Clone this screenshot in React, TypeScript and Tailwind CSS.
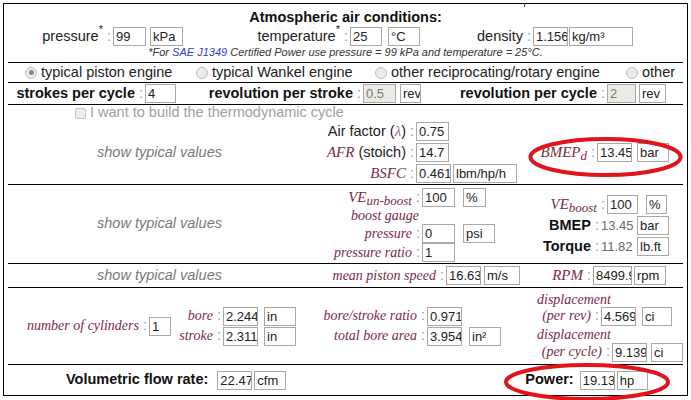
import React from 'react';

function Box({ children, className = '', gray = false }: { children?: React.ReactNode; className?: string; gray?: boolean }) {
  return (
    <span
      className={`inline-flex h-[19px] shrink-0 items-center overflow-hidden whitespace-nowrap border border-[#a8a8a8] pl-[2px] text-[13px] font-normal not-italic leading-none ${gray ? 'bg-[#ebebe4] text-[#7a7a7a]' : 'bg-white text-[#222]'} ${className}`}
    >
      {children}
    </span>
  );
}

const Colon = () => <span className="ml-[4px] mr-[2px] font-normal not-italic text-[#9a9a9a]">:</span>;

// Times-like italic (formula symbols)
function Ser({ children, className = '' }: { children: React.ReactNode; className?: string }) {
  return <span className={`font-['Liberation_Serif'] text-[15px] italic text-[#7b2a44] ${className}`}>{children}</span>;
}

// narrower italic used for the worded labels
function Lbl({ children }: { children: React.ReactNode }) {
  return <span className="font-['Liberation_Serif'] text-[14px] italic text-[#7b2a44]">{children}</span>;
}

function Radio({ checked = false }: { checked?: boolean }) {
  return (
    <span className="inline-flex h-[12px] w-[12px] shrink-0 items-center justify-center rounded-full border border-[#bdbdbd] bg-[#ececec]">
      {checked && <span className="h-[5px] w-[5px] rounded-full bg-[#8a8a8a]" />}
    </span>
  );
}

const Hr = () => <div className="ml-[4px] mr-[4px] h-px shrink-0 bg-black" />;

const Typical = () => (
  <div className="flex w-[311px] shrink-0 items-center justify-center italic text-[#7a7a7a]">show typical values</div>
);

const Star = () => <span className="relative -top-[3px] text-[11px] leading-none">*</span>;

export default function App() {
  return (
    <div className="relative h-[400px] w-[691px] bg-white font-['Liberation_Sans'] text-[14.5px] text-[#222]">
      <div className="absolute left-[524px] top-0 h-[4px] w-px bg-[#6b3346]" />

      <div className="ml-[3px] mt-[3px] flex h-[393px] w-[685px] flex-col border border-black">
        {/* atmospheric conditions */}
        <div className="flex h-[58px] shrink-0 flex-col">
          <div className="mt-[4px] h-[19px] text-center font-bold leading-[19px] text-[#111]">Atmospheric air conditions:</div>
          <div className="flex h-[19px] items-center leading-[19px]">
            <span className="flex w-[109px] justify-end">
              pressure<Star />
              <Colon />
            </span>
            <Box className="w-[33px]">99</Box>
            <Box className="ml-[4px] w-[33px]">kPa</Box>
            <span className="flex w-[167px] justify-end">
              temperature<Star />
              <Colon />
            </span>
            <Box className="w-[32px]">25</Box>
            <Box className="ml-[6px] w-[32px]">°C</Box>
            <span className="flex w-[113px] justify-end">
              density
              <Colon />
            </span>
            <Box className="w-[35px]">1.156</Box>
            <Box className="ml-px w-[64px]">kg/m³</Box>
          </div>
          <div className="h-[13px] text-center text-[11px] italic leading-[13px] text-[#333]">
            *For <span className="text-[#2b3fd1]">SAE J1349</span> Certified Power use pressure = 99 kPa and temperature = 25°C.
          </div>
        </div>
        <Hr />

        {/* engine type */}
        <div className="flex h-[19px] shrink-0 items-center">
          <div className="flex w-[186px] items-center gap-[4px] pl-[21px]">
            <Radio checked />
            <span>typical piston engine</span>
          </div>
          <div className="flex w-[181px] items-center gap-[4px] pl-[6px]">
            <Radio />
            <span>typical Wankel engine</span>
          </div>
          <div className="flex w-[255px] items-center gap-[4px] pl-[4px]">
            <Radio />
            <span>other reciprocating/rotary engine</span>
          </div>
          <div className="flex items-center gap-[4px]">
            <Radio />
            <span>other</span>
          </div>
        </div>
        <Hr />

        {/* strokes */}
        <div className="flex h-[21px] shrink-0 items-center font-bold text-[#111]">
          <span className="flex w-[141px] justify-end">
            strokes per cycle
            <Colon />
          </span>
          <Box className="w-[31px]">4</Box>
          <span className="flex w-[187px] justify-end">
            revolution per stroke
            <Colon />
          </span>
          <Box gray className="w-[33px]">0.5</Box>
          <Box className="ml-[4px] w-[21px]">rev</Box>
          <span className="flex w-[186px] justify-end">
            revolution per cycle
            <Colon />
          </span>
          <Box gray className="w-[29px]">2</Box>
          <Box className="ml-[3px] w-[27px]">rev</Box>
        </div>
        <Hr />

        <div className="flex h-[16px] shrink-0 items-center gap-[4px] pl-[71px] text-[#a0a0a0]">
          <span className="h-[11px] w-[11px] rounded-[2px] border border-[#c4c4c4] bg-[#eeeeee]" />
          <span>I want to build the thermodynamic cycle</span>
        </div>

        {/* section 1 */}
        <div className="flex h-[63px] shrink-0">
          <Typical />
          <div className="flex w-[215px] shrink-0 flex-col justify-center gap-[2px]">
            <div className="flex h-[19px] items-center">
              <span className="flex w-[101px] items-baseline justify-end">
                Air factor (<Ser className="text-[#a0607a]">λ</Ser>)
                <Colon />
              </span>
              <Box className="w-[33px]">0.75</Box>
            </div>
            <div className="flex h-[19px] items-center">
              <span className="flex w-[101px] items-baseline justify-end">
                <Ser>AFR</Ser>&nbsp;(stoich)
                <Colon />
              </span>
              <Box className="w-[33px]">14.7</Box>
            </div>
            <div className="flex h-[19px] items-center">
              <span className="flex w-[101px] items-baseline justify-end">
                <Ser>BSFC</Ser>
                <Colon />
              </span>
              <Box className="w-[35px]">0.461</Box>
              <Box className="ml-[2px] w-[64px]">lbm/hp/h</Box>
            </div>
          </div>
          <div className="flex flex-1 items-center">
            <span className="flex w-[67px] items-baseline justify-end">
              <Ser>
                BMEP<sub className="text-[13px]">d</sub>
              </Ser>
              <Colon />
            </span>
            <Box className="w-[35px]">13.45</Box>
            <Box className="ml-[5px] w-[32px]">bar</Box>
          </div>
        </div>
        <Hr />

        {/* section 2 */}
        <div className="flex h-[78px] shrink-0">
          <Typical />
          <div className="flex w-[215px] shrink-0 flex-col pt-[3px]">
            <div className="flex h-[19px] items-center">
              <span className="flex w-[107px] items-baseline justify-end">
                <Ser>
                  VE<sub className="text-[13px]">un-boost</sub>
                </Ser>
                <Colon />
              </span>
              <Box className="w-[33px]">100</Box>
              <Box className="ml-[8px] w-[23px]">%</Box>
            </div>
            <div className="flex h-[17px] items-center">
              <span className="flex w-[104px] justify-end">
                <Lbl>boost gauge</Lbl>
              </span>
            </div>
            <div className="flex h-[19px] items-center">
              <span className="flex w-[107px] items-baseline justify-end">
                <Lbl>pressure</Lbl>
                <Colon />
              </span>
              <Box className="w-[33px]">0</Box>
              <Box className="ml-[8px] w-[32px]">psi</Box>
            </div>
            <div className="flex h-[19px] items-center">
              <span className="flex w-[107px] items-baseline justify-end">
                <Lbl>pressure ratio</Lbl>
                <Colon />
              </span>
              <Box className="w-[33px]">1</Box>
            </div>
          </div>
          <div className="flex flex-1 flex-col gap-[2px] pt-[10px]">
            <div className="flex h-[19px] items-center">
              <span className="flex w-[77px] items-baseline justify-end">
                <Ser>
                  VE<sub className="text-[13px]">boost</sub>
                </Ser>
                <Colon />
              </span>
              <Box className="w-[31px]">100</Box>
              <Box className="ml-[8px] w-[21px]">%</Box>
            </div>
            <div className="flex h-[19px] items-center">
              <span className="flex w-[71px] justify-end font-bold text-[#111]">
                BMEP
                <Colon />
              </span>
              <span className="w-[36px] text-[13px] text-[#6a6a6a]">13.45</span>
              <Box className="w-[32px]">bar</Box>
            </div>
            <div className="flex h-[19px] items-center">
              <span className="flex w-[71px] justify-end font-bold text-[#111]">
                Torque
                <Colon />
              </span>
              <span className="w-[36px] text-[13px] text-[#6a6a6a]">11.82</span>
              <Box className="w-[32px]">lb.ft</Box>
            </div>
          </div>
        </div>
        <Hr />

        {/* speed */}
        <div className="flex h-[23px] shrink-0">
          <Typical />
          <div className="flex w-[215px] shrink-0 items-center">
            <span className="flex w-[131px] items-baseline justify-end">
              <Lbl>mean piston speed</Lbl>
              <Colon />
            </span>
            <Box className="w-[35px]">16.63</Box>
            <Box className="ml-[3px] w-[36px]">m/s</Box>
          </div>
          <div className="flex flex-1 items-center">
            <span className="flex w-[63px] items-baseline justify-end">
              <Ser>RPM</Ser>
              <Colon />
            </span>
            <Box className="w-[39px]">8499.99</Box>
            <Box className="ml-[2px] w-[32px]">rpm</Box>
          </div>
        </div>
        <Hr />

        {/* geometry */}
        <div className="flex h-[76px] shrink-0 items-center">
          <div className="flex w-[167px] shrink-0 items-center">
            <span className="flex w-[145px] items-baseline justify-end">
              <Lbl>number of cylinders</Lbl>
              <Colon />
            </span>
            <Box className="w-[22px]">1</Box>
          </div>
          <div className="flex w-[129px] shrink-0 flex-col gap-px">
            <div className="flex h-[19px] items-center">
              <span className="flex w-[52px] items-baseline justify-end">
                <Lbl>bore</Lbl>
                <Colon />
              </span>
              <Box className="w-[35px]">2.244</Box>
              <Box className="ml-[6px] w-[32px]">in</Box>
            </div>
            <div className="flex h-[19px] items-center">
              <span className="flex w-[52px] items-baseline justify-end">
                <Lbl>stroke</Lbl>
                <Colon />
              </span>
              <Box className="w-[35px]">2.311</Box>
              <Box className="ml-[6px] w-[32px]">in</Box>
            </div>
          </div>
          <div className="flex w-[201px] shrink-0 flex-col gap-px">
            <div className="flex h-[19px] items-center">
              <span className="flex w-[127px] items-baseline justify-end">
                <Lbl>bore/stroke ratio</Lbl>
                <Colon />
              </span>
              <Box className="w-[35px]">0.971</Box>
            </div>
            <div className="flex h-[19px] items-center">
              <span className="flex w-[127px] items-baseline justify-end">
                <Lbl>total bore area</Lbl>
                <Colon />
              </span>
              <Box className="w-[35px]">3.954</Box>
              <Box className="ml-[7px] w-[32px]">in²</Box>
            </div>
          </div>
          <div className="flex flex-1 flex-col">
            <div className="h-[16px] pl-[36px] leading-[16px]">
              <Lbl>displacement</Lbl>
            </div>
            <div className="flex h-[19px] items-center">
              <span className="flex w-[100px] items-baseline justify-end">
                <Lbl>(per rev)</Lbl>
                <Colon />
              </span>
              <Box className="w-[35px]">4.569</Box>
              <Box className="ml-[6px] w-[30px]">ci</Box>
            </div>
            <div className="h-[17px] pl-[36px] leading-[17px]">
              <Lbl>displacement</Lbl>
            </div>
            <div className="flex h-[19px] items-center">
              <span className="flex w-[111px] items-baseline justify-end">
                <Lbl>(per cycle)</Lbl>
                <Colon />
              </span>
              <Box className="w-[35px]">9.139</Box>
              <Box className="ml-[4px] w-[32px]">ci</Box>
            </div>
          </div>
        </div>
        <Hr />

        {/* totals */}
        <div className="flex flex-1 items-center font-bold text-[#111]">
          <span className="ml-[62px]">Volumetric flow rate:</span>
          <Box className="ml-[9px] w-[35px]">22.47</Box>
          <Box className="ml-[2px] w-[32px]">cfm</Box>
          <span className="ml-[239px]">Power:</span>
          <Box className="ml-[6px] w-[35px]">19.13</Box>
          <Box className="ml-[2px] w-[31px]">hp</Box>
        </div>
      </div>

      <svg className="pointer-events-none absolute left-0 top-0" width="691" height="400" viewBox="0 0 691 400">
        <ellipse cx="605.5" cy="154" rx="75" ry="18" fill="none" stroke="#e3131c" strokeWidth="4" />
        <ellipse cx="587" cy="379" rx="81" ry="17" fill="none" stroke="#e3131c" strokeWidth="4" />
      </svg>
    </div>
  );
}
